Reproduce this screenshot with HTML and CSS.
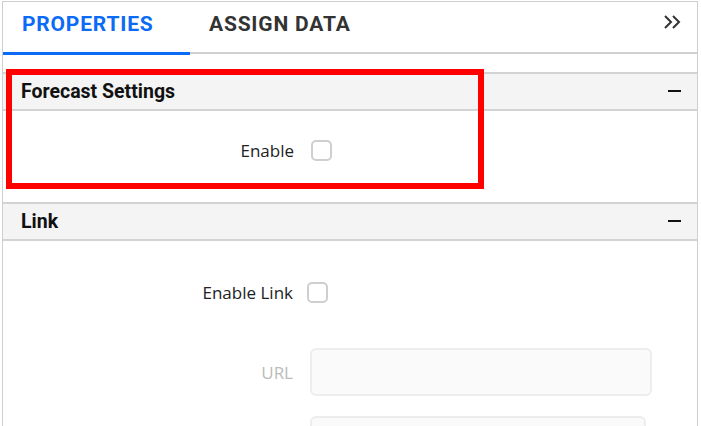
FILE: index.html
```html
<!DOCTYPE html>
<html>
<head>
<meta charset="utf-8">
<link rel="stylesheet" href="styles.css">
</head>
<body>
<div class="panel">
  <div class="tabs">
    <div class="tab active">PROPERTIES</div>
    <div class="tab">ASSIGN DATA</div>
    <div class="collapse">
      <svg width="20" height="14" viewBox="0 0 20 14"><path d="M2 1 L8 7 L2 13 M10 1 L16 7 L10 13" fill="none" stroke="#333" stroke-width="2"/></svg>
    </div>
  </div>
  <section class="group">
    <div class="group-head"><span>Forecast Settings</span><span class="minus"></span></div>
    <div class="group-body forecast">
      <div class="row"><span class="label">Enable</span><span class="check"></span></div>
    </div>
  </section>
  <section class="group">
    <div class="group-head"><span>Link</span><span class="minus"></span></div>
    <div class="group-body link">
      <div class="row"><span class="label">Enable Link</span><span class="check"></span></div>
      <div class="row field"><span class="label muted">URL</span><span class="input"></span></div>
      <div class="row field"><span class="label muted"></span><span class="input short"></span></div>
    </div>
  </section>
  <div class="highlight"></div>
</div>
</body>
</html>
```
FILE: styles.css
```css
html, body { margin: 0; padding: 0; background: #fff; }
body { font-family: Roboto, "Open Sans", sans-serif; }

.panel {
  position: relative;
  margin: 1px 0 0 2px;
  width: 696px;
  height: 425px;
  box-sizing: border-box;
  border: 1px solid #cfcfcf;
  border-bottom: none;
  overflow: hidden;
}

.tabs {
  display: flex;
  align-items: flex-start;
  height: 52px;
  box-sizing: border-box;
  border-bottom: 2px solid #d0d0d0;
}
.tab {
  height: 53px;
  box-sizing: border-box;
  padding: 10px 19px 0;
  font-size: 21px;
  line-height: 24px;
  font-weight: 700;
  letter-spacing: 0.8px;
  color: #333;
}
.tab.active {
  width: 187px;
  color: #0b6bf6;
  border-bottom: 3px solid #0b6bf6;
}
.collapse {
  margin-left: auto;
  margin-right: 14px;
  padding-top: 13px;
  line-height: 0;
}

.group {
  border-top: 2px solid #d3d3d3;
}
.tabs + .group { margin-top: 18px; }
.group-head {
  display: flex;
  align-items: center;
  justify-content: space-between;
  height: 35px;
  padding: 0 16px 0 18px;
  background: #f4f4f4;
  border-bottom: 2px solid #d3d3d3;
  font-size: 19.5px;
  font-weight: 700;
  color: #111;
}
.minus {
  width: 13px;
  height: 2px;
  background: #111;
  margin-top: -2px;
}

.group-body.forecast {
  height: 91px;
  padding-top: 28px;
  box-sizing: border-box;
}
.row {
  display: flex;
  align-items: center;
}
.label {
  width: 291px;
  text-align: right;
  font-family: "Open Sans", sans-serif;
  font-size: 17px;
  color: #222;
}
.label.muted { color: #bbb; }
.check {
  width: 21px;
  height: 21px;
  box-sizing: border-box;
  border: 2px solid #cfcfcf;
  border-radius: 5px;
  margin-left: 17px;
}
.link { padding-top: 40px; }
.link .label { width: 290px; }
.link .check { margin-left: 14px; }
.field { margin-top: 44px; }
.field + .field { margin-top: 20px; }
.input {
  width: 342px;
  height: 48px;
  box-sizing: border-box;
  margin-left: 17px;
  background: #fafafa;
  border: 2px solid #ededed;
  border-radius: 6px;
}
.input.short { width: 336px; }

.highlight {
  position: absolute;
  left: 3px;
  top: 67px;
  width: 478px;
  height: 120px;
  box-sizing: border-box;
  border: 6px solid #ff0000;
}
```
